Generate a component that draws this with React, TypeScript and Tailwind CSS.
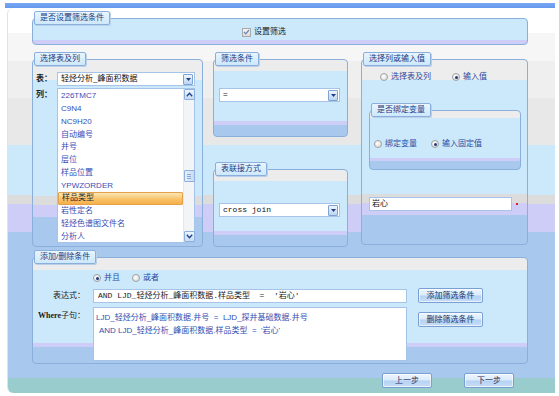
import React from "react";

const FONT = "font-['Liberation_Sans','Noto_Sans_CJK_SC',sans-serif]";

function Legend({ children, className = "" }: { children: React.ReactNode; className?: string }) {
  return (
    <div
      className={`relative -mt-[8px] w-fit h-[14px] px-[5px] leading-[12px] border border-[#8aafdc] rounded-[2px] bg-[linear-gradient(to_bottom,#e8f5fe,#cde8fb)] shadow-[1px_1px_0_#b9cfea] text-[8px] text-[#1d3a80] whitespace-nowrap ${className}`}
    >
      {children}
    </div>
  );
}

function Panel({
  legend,
  boxClass,
  legendClass = "ml-[1px]",
  children,
}: {
  legend: string;
  boxClass: string;
  legendClass?: string;
  children?: React.ReactNode;
}) {
  return (
    <div className="pt-[7px]">
      <div className={`border border-[#8bafdb] rounded-[4px] ${boxClass}`}>
        <Legend className={legendClass}>{legend}</Legend>
        {children}
      </div>
    </div>
  );
}

function Radio({ checked = false }: { checked?: boolean }) {
  return (
    <span className="w-[8px] h-[8px] rounded-full border border-[#a0a0a0] bg-[radial-gradient(circle_at_35%_35%,#ffffff,#d6d6d6)] flex items-center justify-center shrink-0">
      {checked && <span className="w-[3px] h-[3px] rounded-full bg-[#1f3c78]" />}
    </span>
  );
}

function DropBtn() {
  return (
    <span className="w-[10px] h-[11px] mr-[1px] border border-[#7fa2d4] rounded-[1px] bg-[linear-gradient(to_bottom,#eef5fd,#bcd5f2)] flex items-center justify-center shrink-0">
      <svg width="5" height="3" viewBox="0 0 5 3">
        <path d="M0 0 H5 L2.5 3 Z" fill="#1f3f8a" />
      </svg>
    </span>
  );
}

function Select({ value, className = "", mono = false }: { value: string; className?: string; mono?: boolean }) {
  return (
    <div className={`h-[14px] border border-[#a6c3e8] bg-white flex items-center justify-between ${className}`}>
      <span
        className={`pl-[3px] text-[8px] text-[#111] whitespace-nowrap ${
          mono ? "font-['Liberation_Mono','Noto_Sans_CJK_SC',monospace]" : ""
        }`}
      >
        {value}
      </span>
      <DropBtn />
    </div>
  );
}

function Btn({ label, className = "" }: { label: string; className?: string }) {
  return (
    <div
      className={`h-[15px] border border-[#7a9fd3] rounded-[2px] bg-[linear-gradient(to_bottom,#eef6fe_0%,#dbeafb_48%,#b5d2f3_52%,#c8ddf6_100%)] shadow-[inset_0_0_0_1px_rgba(255,255,255,0.6)] flex items-center justify-center text-[8px] text-[#1d2f5f] ${className}`}
    >
      {label}
    </div>
  );
}

const items = [
  "226TMC7",
  "C9N4",
  "NC9H20",
  "自动编号",
  "井号",
  "层位",
  "样品位置",
  "YPWZORDER",
  "样品类型",
  "岩性定名",
  "轻烃色谱图文件名",
  "分析人",
];

function Chevron({ up }: { up: boolean }) {
  return (
    <svg width="7" height="5" viewBox="0 0 7 5">
      <path d={up ? "M0.8 4.2 L3.5 1.2 L6.2 4.2" : "M0.8 0.8 L3.5 3.8 L6.2 0.8"} fill="none" stroke="#1f3f8a" strokeWidth="1.3" />
    </svg>
  );
}

function ListBox() {
  return (
    <div className="w-[138px] h-[155px] border border-[#a6c3e8] bg-white flex">
      <div className="w-[125px] pt-[1px] flex flex-col">
        {items.map((it) => {
          const sel = it === "样品类型";
          return (
            <div
              key={it}
              className={`h-[12.75px] shrink-0 flex items-center pl-[3px] text-[8px] whitespace-nowrap ${
                sel
                  ? "border border-[#e2a14a] rounded-[1px] bg-[linear-gradient(to_bottom,#fde7b4,#f9c26a_55%,#f6b04a)] text-[#2a2a2a]"
                  : "text-[#3a4db5]"
              }`}
            >
              {it}
            </div>
          );
        })}
      </div>
      <div className="w-[11px] flex flex-col items-center bg-[#f2f4f6] border-l border-[#e3e8ee]">
        <div className="w-[11px] h-[11px] border border-[#8eb0dc] rounded-[1px] bg-[linear-gradient(to_bottom,#eef5fd,#c5dbf4)] flex items-center justify-center">
          <Chevron up />
        </div>
        <div className="mt-[70px] w-[11px] h-[12px] border border-[#8eb0dc] rounded-[1px] bg-[linear-gradient(to_right,#e4effc,#c9dcf4)] flex flex-col items-center justify-center gap-[1px]">
          <span className="w-[4px] h-[1px] bg-[#8aa8d0]" />
          <span className="w-[4px] h-[1px] bg-[#8aa8d0]" />
          <span className="w-[4px] h-[1px] bg-[#8aa8d0]" />
        </div>
        <div className="flex-1" />
        <div className="w-[11px] h-[11px] border border-[#8eb0dc] rounded-[1px] bg-[linear-gradient(to_bottom,#eef5fd,#c5dbf4)] flex items-center justify-center">
          <Chevron up={false} />
        </div>
      </div>
    </div>
  );
}

const shortBg =
  "bg-[linear-gradient(to_bottom,#ececec_0px,#ececec_11px,#cce9fc_11px,#cce9fc_calc(100%_-_15px),#cdcdf8_calc(100%_-_15px),#cdcdf8_calc(100%_-_11px),#a8c8ee_calc(100%_-_11px))]";
const tallBg =
  "bg-[linear-gradient(to_bottom,#ededed_0px,#ededed_20px,#cce9fc_20px,#cce9fc_calc(100%_-_50px),#dcdcdc_calc(100%_-_50px),#dcdcdc_calc(100%_-_41px),#cdcdf8_calc(100%_-_41px),#cdcdf8_calc(100%_-_29px),#a8c8ee_calc(100%_-_29px))]";

export default function App() {
  return (
    <div className={`w-[559px] h-[396px] bg-white overflow-hidden ${FONT}`}>
      <div className="ml-[5px] pt-[3px] w-[550px]">
        <div className="h-[5px] bg-[linear-gradient(to_bottom,#7aa8f3,#6597ec)]" />
        <div className="ml-[2px] w-[548px] h-[385px] rounded-tl-[6px] rounded-bl-[6px] border-l border-[#e2e2e2] bg-[linear-gradient(to_bottom,#ffffff_0px,#ffffff_25px,#f6f6f6_25px,#f6f6f6_53px,#efefef_53px,#efefef_90px,#e8e8e8_90px,#e8e8e8_137px,#cce9fc_137px,#cce9fc_187px,#dcdcdc_187px,#dcdcdc_196px,#cdcdf8_196px,#cdcdf8_224px,#a8c8ee_224px,#a8c8ee_370px,#99cccc_370px)]">
          <div className="pl-[24px] pt-[3px] w-[520px]">
            {/* Panel 1 */}
            <Panel
              legend="是否设置筛选条件"
              boxClass="h-[27px] bg-[linear-gradient(to_bottom,#cce9fc_calc(100%_-_4px),#cdcdf8_calc(100%_-_4px))]"
            >
              <div className="mt-[1px] pl-[209px] flex items-center gap-[3px]">
                <span className="w-[9px] h-[9px] border border-[#a9a9a9] bg-[linear-gradient(to_bottom,#f4f4f4,#dcdcdc)] flex items-center justify-center">
                  <svg width="7" height="6" viewBox="0 0 7 6">
                    <path d="M1 3 L2.8 4.8 L6 1" fill="none" stroke="#6a86b3" strokeWidth="1.2" />
                  </svg>
                </span>
                <span className="text-[8px] text-[#1a1a1a]">设置筛选</span>
              </div>
            </Panel>

            {/* Middle row */}
            <div className="mt-[7px] flex">
              {/* Panel 2 */}
              <div className="w-[171px]">
                <Panel legend="选择表及列" boxClass={`h-[188px] ${tallBg}`}>
                  <div className="mt-[6px] flex items-center">
                    <span className="w-[24px] pl-[3px] text-[8px] font-bold text-[#1a1a1a]">表：</span>
                    <Select value="轻烃分析_峰面积数据" className="w-[138px]" />
                  </div>
                  <div className="mt-[2px] flex">
                    <span className="w-[24px] pl-[3px] pt-[1px] text-[8px] font-bold text-[#1a1a1a]">列：</span>
                    <ListBox />
                  </div>
                </Panel>
              </div>

              {/* Panels 3 & 4 */}
              <div className="ml-[10px] w-[135px] flex flex-col">
                <Panel legend="筛选条件" boxClass={`h-[78px] ${shortBg}`}>
                  <Select value="=" className="mt-[22px] ml-[5px] w-[121px]" />
                </Panel>
                <div className="mt-[25px]">
                  <Panel legend="表联接方式" boxClass={`h-[78px] ${shortBg}`}>
                    <Select value="cross join" mono className="mt-[27px] ml-[5px] w-[121px]" />
                  </Panel>
                </div>
              </div>

              {/* Panel 5 */}
              <div className="ml-[13px] w-[167px]">
                <Panel legend="选择列或输入值" boxClass={`h-[186px] ${tallBg}`}>
                  <div className="mt-[5px] h-[12px] pl-[18px] flex items-center text-[8px] text-[#2c4aa0]">
                    <Radio />
                    <span className="ml-[3px]">选择表及列</span>
                    <span className="ml-[21px]">
                      <Radio checked />
                    </span>
                    <span className="ml-[3px]">输入值</span>
                  </div>
                  <div className="mt-[20px] ml-[7px] w-[152px]">
                    <Panel
                      legend="是否绑定变量"
                      boxClass="h-[60px] bg-[linear-gradient(to_bottom,#ececec_0px,#ececec_7px,#cce9fc_7px,#cce9fc_calc(100%_-_11px),#cdcdf8_calc(100%_-_11px),#cdcdf8_calc(100%_-_8px),#a8c8ee_calc(100%_-_8px))]"
                    >
                      <div className="mt-[21px] h-[12px] pl-[4px] flex items-center text-[8px] text-[#2c4aa0]">
                        <Radio />
                        <span className="ml-[3px]">绑定变量</span>
                        <span className="ml-[14px]">
                          <Radio checked />
                        </span>
                        <span className="ml-[3px]">输入固定值</span>
                      </div>
                    </Panel>
                  </div>
                  <div className="mt-[27px] ml-[7px] flex items-center">
                    <div className="w-[143px] h-[14px] border border-[#a6c3e8] bg-white flex items-center pl-[2px] text-[8px] text-[#111]">
                      岩心
                    </div>
                    <span className="ml-[4px] w-[2px] h-[2px] bg-[#e02020]" />
                  </div>
                </Panel>
              </div>
            </div>

            {/* Bottom panel */}
            <div className="mt-[3px]">
              <Panel
                legend="添加/删除条件"
                legendClass="ml-[1px]"
                boxClass="h-[107px] bg-[linear-gradient(to_bottom,#ececec_0px,#ececec_12px,#cce9fc_12px,#cce9fc_calc(100%_-_20px),#cdcdf8_calc(100%_-_20px),#cdcdf8_calc(100%_-_16px),#a8c8ee_calc(100%_-_16px))]"
              >
                <div className="mt-[8px] h-[12px] pl-[60px] flex items-center text-[8px] text-[#2c4aa0]">
                  <Radio checked />
                  <span className="ml-[3px]">并且</span>
                  <span className="ml-[12px]">
                    <Radio />
                  </span>
                  <span className="ml-[3px]">或者</span>
                </div>
                <div className="mt-[4px] flex items-center">
                  <span className="w-[52px] text-right text-[8px] text-[#1a1a1a]">表达式：</span>
                  <div className="ml-[8px] w-[314px] h-[14px] border border-[#a6c3e8] bg-white flex items-center pl-[4px] text-[8px] text-[#1a1a1a] whitespace-pre font-['Liberation_Mono','Noto_Sans_CJK_SC',monospace]">
                    {"AND LJD_轻烃分析_峰面积数据.样品类型  =  '岩心'"}
                  </div>
                  <Btn label="添加筛选条件" className="ml-[11px] w-[65px]" />
                </div>
                <div className="mt-[4px] flex items-start">
                  <span className="w-[52px] pt-[3px] text-right text-[8px] text-[#1a1a1a]">
                    <span className="font-['Liberation_Serif',serif] font-bold">Where</span>子句：
                  </span>
                  <div className="ml-[8px] w-[314px] h-[54px] border border-[#a6c3e8] bg-white pl-[2px] pt-[3px] text-[8px] leading-[13px] text-[#3050b0] whitespace-pre">
                    <div>{"LJD_轻烃分析_峰面积数据.井号  =  LJD_探井基础数据.井号"}</div>
                    <div className="pl-[3px]">{"AND LJD_轻烃分析_峰面积数据.样品类型  =  '岩心'"}</div>
                  </div>
                  <Btn label="删除筛选条件" className="ml-[11px] mt-[5px] w-[65px]" />
                </div>
              </Panel>
            </div>

            {/* Footer buttons */}
            <div className="mt-[9px] pr-[14px] flex justify-end gap-[32px]">
              <Btn label="上一步" className="w-[50px]" />
              <Btn label="下一步" className="w-[50px]" />
            </div>
          </div>
        </div>
      </div>
    </div>
  );
}
